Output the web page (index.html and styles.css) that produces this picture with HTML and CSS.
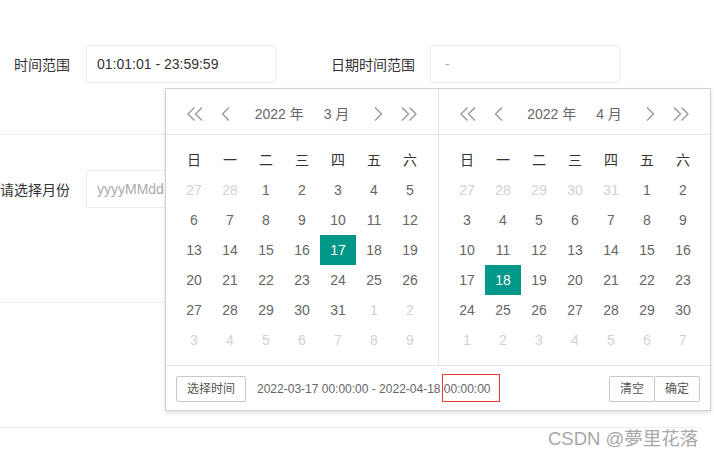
FILE: index.html
```html
<!DOCTYPE html>
<html lang="zh">
<head>
<meta charset="utf-8">
<title>laydate</title>
<link rel="stylesheet" href="styles.css">
</head>
<body>
<div class="page">
  <div class="section s1">
    <div class="field">
      <label class="label">时间范围</label>
      <div class="input">01:01:01 - 23:59:59</div>
    </div>
    <div class="field f2">
      <label class="label l2">日期时间范围</label>
      <div class="input ph">&nbsp;-</div>
    </div>
  </div>
  <div class="section s2">
    <div class="field">
      <label class="label">请选择月份</label>
      <div class="input ph">yyyyMMdd</div>
    </div>
  </div>
  <div class="section s3"></div>

  <div class="laydate">
    <div class="panels">
      <div class="panel">
        <div class="head">
          <svg class="ico dbl" viewBox="0 0 16 14"><path d="M7.5 0.5 L1 7 L7.5 13.5 M15 0.5 L8.5 7 L15 13.5"/></svg>
          <svg class="ico sgl" viewBox="0 0 9 14"><path d="M8 0.5 L1.5 7 L8 13.5"/></svg>
          <div class="ym"><span>2022 年</span><span>3 月</span></div>
          <svg class="ico sgl" viewBox="0 0 9 14"><path d="M1 0.5 L7.5 7 L1 13.5"/></svg>
          <svg class="ico dbl gap" viewBox="0 0 16 14"><path d="M1 0.5 L7.5 7 L1 13.5 M8.5 0.5 L15 7 L8.5 13.5"/></svg>
        </div>
        <div class="content">
          <div class="grid">
            <span class="wk">日</span><span class="wk">一</span><span class="wk">二</span><span class="wk">三</span><span class="wk">四</span><span class="wk">五</span><span class="wk">六</span>
            <span class="o">27</span><span class="o">28</span><span>1</span><span>2</span><span>3</span><span>4</span><span>5</span>
            <span>6</span><span>7</span><span>8</span><span>9</span><span>10</span><span>11</span><span>12</span>
            <span>13</span><span>14</span><span>15</span><span>16</span><span class="sel">17</span><span>18</span><span>19</span>
            <span>20</span><span>21</span><span>22</span><span>23</span><span>24</span><span>25</span><span>26</span>
            <span>27</span><span>28</span><span>29</span><span>30</span><span>31</span><span class="o">1</span><span class="o">2</span>
            <span class="o">3</span><span class="o">4</span><span class="o">5</span><span class="o">6</span><span class="o">7</span><span class="o">8</span><span class="o">9</span>
          </div>
        </div>
      </div>
      <div class="panel right">
        <div class="head">
          <svg class="ico dbl" viewBox="0 0 16 14"><path d="M7.5 0.5 L1 7 L7.5 13.5 M15 0.5 L8.5 7 L15 13.5"/></svg>
          <svg class="ico sgl" viewBox="0 0 9 14"><path d="M8 0.5 L1.5 7 L8 13.5"/></svg>
          <div class="ym"><span>2022 年</span><span>4 月</span></div>
          <svg class="ico sgl" viewBox="0 0 9 14"><path d="M1 0.5 L7.5 7 L1 13.5"/></svg>
          <svg class="ico dbl gap" viewBox="0 0 16 14"><path d="M1 0.5 L7.5 7 L1 13.5 M8.5 0.5 L15 7 L8.5 13.5"/></svg>
        </div>
        <div class="content">
          <div class="grid">
            <span class="wk">日</span><span class="wk">一</span><span class="wk">二</span><span class="wk">三</span><span class="wk">四</span><span class="wk">五</span><span class="wk">六</span>
            <span class="o">27</span><span class="o">28</span><span class="o">29</span><span class="o">30</span><span class="o">31</span><span>1</span><span>2</span>
            <span>3</span><span>4</span><span>5</span><span>6</span><span>7</span><span>8</span><span>9</span>
            <span>10</span><span>11</span><span>12</span><span>13</span><span>14</span><span>15</span><span>16</span>
            <span>17</span><span class="sel">18</span><span>19</span><span>20</span><span>21</span><span>22</span><span>23</span>
            <span>24</span><span>25</span><span>26</span><span>27</span><span>28</span><span>29</span><span>30</span>
            <span class="o">1</span><span class="o">2</span><span class="o">3</span><span class="o">4</span><span class="o">5</span><span class="o">6</span><span class="o">7</span>
          </div>
        </div>
      </div>
    </div>
    <div class="footer">
      <span class="btn">选择时间</span>
      <span class="range">2022-03-17 00:00:00 - 2022-04-18 <span class="mark">00:00:00</span></span>
      <div class="btns"><span class="btn">清空</span><span class="btn">确定</span></div>
    </div>
  </div>

  <div class="watermark">CSDN @夢里花落</div>
</div>
</body>
</html>
```
FILE: styles.css
```css
* { box-sizing: border-box; }
html, body { margin: 0; padding: 0; background: #fff; }
body {
  font-family: "Liberation Sans", "Noto Sans CJK SC", sans-serif;
  font-size: 14px;
  color: #333;
}
.page { position: relative; width: 714px; height: 460px; overflow: hidden; }

.section { width: 701px; border-bottom: 1px solid #eee; }
.s1 { height: 135px; padding-top: 45px; display: flex; }
.s2 { height: 168px; padding-top: 35px; display: flex; }
.s3 { height: 125px; }

.field { display: flex; align-items: center; height: 38px; }
.label { width: 70px; text-align: right; margin-right: 16px; color: #333; white-space: nowrap; }
.f2 { margin-left: 55px; }
.l2 { width: 84px; margin-right: 15px; }
.input {
  width: 190px; height: 38px; line-height: 36px;
  border: 1px solid #eee; border-radius: 2px;
  padding-left: 10px; color: #333; background: #fff;
}
.input.ph { color: #aaa; }

.laydate {
  position: absolute; left: 165px; top: 88px;
  width: 546px;
  border: 1px solid #d2d2d2;
  background: #fff;
  box-shadow: 0 2px 4px rgba(0,0,0,.12);
  color: #666;
}
.panels { display: flex; }
.panel { width: 272px; }
.panel.right { border-left: 1px solid #e2e2e2; }
.head {
  height: 46px; padding: 10px 21px 5px 21px;
  border-bottom: 1px solid #e2e2e2;
  display: flex; align-items: center;
}
.ico { fill: none; stroke: #999; stroke-width: 1.4; height: 14px; flex: none; }
.ico.dbl { width: 16px; }
.ico.sgl { width: 9px; margin-left: 18px; }
.ico.sgl + .ym + .ico.sgl { margin-left: 0; }
.ico.gap { margin-left: 18px; }
.ym { flex: 1; display: flex; justify-content: center; gap: 20px; line-height: 30px; color: #666; white-space: nowrap; }

.content { padding: 10px; }
.grid { display: grid; grid-template-columns: repeat(7, 36px); grid-auto-rows: 30px; }
.grid span { text-align: center; line-height: 30px; color: #666; }
.grid .wk { color: #333; }
.grid .o { color: #d2d2d2; }
.grid .sel { background: #009688; color: #fff; }

.footer {
  height: 45px; border-top: 1px solid #e2e2e2;
  padding: 10px 10px 8px 10px;
  display: flex; align-items: flex-start;
  font-size: 12px;
}
.btn {
  display: inline-block; height: 26px; line-height: 24px;
  padding: 0 10px; border: 1px solid #c9c9c9; border-radius: 2px;
  color: #555; background: #fff; white-space: nowrap;
}
.range { margin-left: 11px; line-height: 26px; color: #666; white-space: nowrap; }
.mark { position: relative; }
.mark::after {
  content: ""; position: absolute;
  left: -2px; right: -9px; top: -8px; bottom: -6px;
  border: 1px solid #e53935;
}
.btns { margin-left: auto; display: flex; }
.btns .btn + .btn { margin-left: -1px; }

.watermark {
  position: absolute; left: 548px; top: 427px;
  font-size: 18.5px; line-height: 24px;
  color: #a8a8a8; white-space: nowrap;
}
```
